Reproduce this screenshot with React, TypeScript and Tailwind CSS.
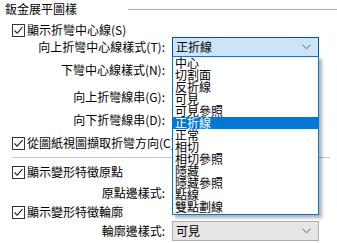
import React from "react";

const items = [
  "中心", "切割面", "反折線", "可見", "可見參照", "正折線", "正常",
  "相切", "相切參照", "隱藏", "隱藏參照", "點線", "雙點劃線"
];

const Check = () => (
  <span className="w-[13px] h-[13px] border border-[#333333] bg-white flex items-center justify-center shrink-0">
    <svg width="11" height="11" viewBox="0 0 11 11">
      <path d="M1.5 5.5 L4.2 8.2 L9.5 2.2" fill="none" stroke="#222" strokeWidth="1.1" />
    </svg>
  </span>
);

const Chevron = () => (
  <svg width="9" height="6" viewBox="0 0 9 6" className="shrink-0">
    <path d="M0.5 0.8 L4.5 4.8 L8.5 0.8" fill="none" stroke="#606060" strokeWidth="1" />
  </svg>
);

// value is left empty for boxes that sit under the open list
const Combo = ({ value, focused }: { value: string; focused?: boolean }) => (
  <div
    className={
      focused
        ? "w-[147px] h-[20px] flex items-center justify-between pl-[3px] pr-[7px] border border-[#005499] bg-[#cce4f7]"
        : "w-[147px] h-[20px] flex items-center justify-between pl-[3px] pr-[7px] border border-[#adadad] bg-[#e5e5e5]"
    }
  >
    <span className="text-[12px] leading-[14px]">{value}</span>
    <Chevron />
  </div>
);

const FieldRow = ({ label, value, focused, cls }: { label: string; value: string; focused?: boolean; cls: string }) => (
  <div className={"flex items-center h-[20px] " + cls}>
    <div className="w-[166px] text-right text-[12px] leading-[14px] pr-px">{label}</div>
    <div className="ml-[6px]">
      <Combo value={value} focused={focused} />
    </div>
  </div>
);

const CheckRow = ({ label, cls }: { label: string; cls: string }) => (
  <div className={"flex items-center h-[16px] pl-[12px] gap-[2px] " + cls}>
    <Check />
    <span className="text-[12px] leading-[14px] whitespace-nowrap">{label}</span>
  </div>
);

export default function App() {
  return (
    <div className="relative w-[337px] h-[243px] bg-white overflow-hidden text-black font-['Noto_Sans_CJK_TC','Noto_Sans',sans-serif]">
      <div className="flex flex-col">
        <div className="flex items-center h-[18px]">
          <span className="pl-[5px] w-[128px] text-[12px] leading-[14px]">鈑金展平圖樣</span>
          <div className="flex-1 h-px bg-[#b0b0b0]" />
        </div>

        <CheckRow label="顯示折彎中心線(S)" cls="mt-[4px]" />
        <FieldRow label="向上折彎中心線樣式(T):" value="正折線" focused cls="mt-[-1px]" />
        <FieldRow label="下彎中心線樣式(N):" value="" cls="mt-[3px]" />
        <FieldRow label="向上折彎線串(G):" value="" cls="mt-[7px]" />
        <FieldRow label="向下折彎線串(D):" value="" cls="mt-[3px]" />
        <CheckRow label="從圖紙視圖擷取折彎方向(C)" cls="mt-[5px]" />

        <div className="ml-[12px] mr-[7px] mt-[6px] h-px bg-[#c8c8c8]" />

        <CheckRow label="顯示變形特徵原點" cls="mt-[6px]" />
        <FieldRow label="原點邊樣式:" value="" cls="mt-[3px]" />
        <CheckRow label="顯示變形特徵輪廓" cls="mt-[1px]" />
        <FieldRow label="輪廓邊樣式:" value="可見" cls="mt-[1px]" />
      </div>

      {/* open dropdown list */}
      <div className="absolute left-[172px] top-[56px] w-[147px] border border-[#0078d7] bg-white shadow-[3px_3px_3px_rgba(0,0,0,0.3)]">
        {items.map((it, i) => (
          <div
            key={it}
            className={
              i === 5
                ? "h-[12px] pl-[2px] text-[12px] leading-[12px] bg-[#0078d7] text-white"
                : "h-[12px] pl-[2px] text-[12px] leading-[12px]"
            }
          >
            {it}
          </div>
        ))}
        <div className="h-[1px]" />
      </div>
    </div>
  );
}
